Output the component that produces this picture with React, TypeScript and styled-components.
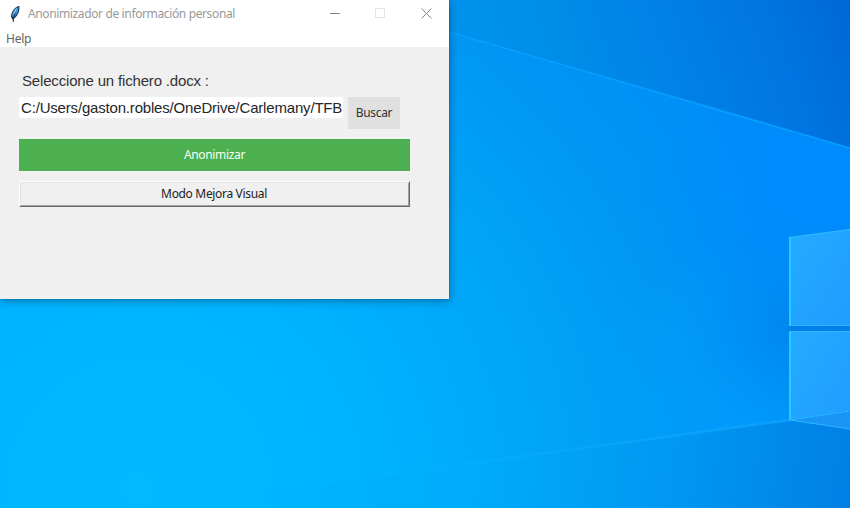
import React from "react";
import styled, { createGlobalStyle } from "styled-components";

const GlobalStyle = createGlobalStyle`
  * { box-sizing: border-box; }
  body { margin: 0; overflow: hidden; }
`;

const Desktop = styled.main`
  position: relative;
  width: 850px;
  height: 508px;
  overflow: hidden;
  background: #00a5f9;
  font-family: "Noto Sans", "Open Sans", sans-serif;
  font-size: 12px;
`;

const Wallpaper = styled.svg`
  position: absolute;
  inset: 0;
  display: block;
`;

const AppWindow = styled.section`
  position: relative;
  display: flex;
  flex-direction: column;
  width: 449px;
  height: 299px;
  background: #f0f0f0;
  box-shadow: 0 0 1px rgba(0, 50, 90, 0.5), 1px 2px 8px rgba(0, 45, 70, 0.45);
`;

const TitleBar = styled.header`
  display: flex;
  align-items: center;
  height: 27px;
  padding-left: 8px;
  background: #fff;
`;

const Title = styled.h1`
  flex: 1;
  margin: 0 0 0 7px;
  font-size: 12px;
  font-weight: 400;
  line-height: 27px;
  letter-spacing: -0.37px;
  color: #999;
  white-space: nowrap;
`;

const CaptionButton = styled.button`
  display: flex;
  align-items: center;
  justify-content: center;
  width: 45.5px;
  height: 27px;
  padding: 0;
  border: 0;
  background: none;
`;

const MenuBar = styled.nav`
  height: 20px;
  padding-left: 6px;
  background: #fff;
  color: #5c6660;
  line-height: 23px;
  letter-spacing: -0.25px;
`;

const Form = styled.div`
  display: flex;
  flex-direction: column;
  gap: 10px;
  width: 410px;
  padding: 24px 0 0 19px;
`;

const FileField = styled.div`
  display: grid;
  grid-template-columns: 324px 52px;
  column-gap: 5px;
  font-family: "Liberation Sans", Arial, sans-serif;
`;

const FieldLabel = styled.label`
  grid-column: 1 / -1;
  height: 26px;
  padding-left: 3px;
  font-size: 15px;
  line-height: 20px;
  letter-spacing: -0.17px;
  color: #333;
  white-space: nowrap;
`;

const PathInput = styled.div`
  height: 21px;
  padding-left: 2px;
  background: #fff;
  font-size: 15px;
  line-height: 21px;
  letter-spacing: -0.18px;
  color: #26262b;
  white-space: nowrap;
`;

const FlatButton = styled.button<{ $bg: string; $fg: string }>`
  height: 32px;
  padding: 0;
  border: 0;
  background: ${(p) => p.$bg};
  color: ${(p) => p.$fg};
  font: 12px/32px "Noto Sans", "Open Sans", sans-serif;
  letter-spacing: -0.33px;
`;

const RaisedButton = styled.button`
  height: 26px;
  padding: 0 1px 0 0;
  border: 1px solid;
  border-color: #fff #696969 #696969 #fff;
  box-shadow: inset 1px 1px #e3e3e3, inset -1px -1px #a0a0a0;
  background: #f0f0f0;
  color: #1c1c1c;
  font: 12px/24px "Noto Sans", "Open Sans", sans-serif;
  letter-spacing: -0.33px;
`;

function DesktopScene() {
  return (
    <Wallpaper width="850" height="508" viewBox="0 0 850 508" aria-hidden="true">
      <defs>
        <radialGradient id="base" gradientUnits="userSpaceOnUse" cx="140" cy="490" r="760">
          <stop offset="0" stopColor="#00b9ff" />
          <stop offset="0.28" stopColor="#00b4ff" />
          <stop offset="0.55" stopColor="#00a4f8" />
          <stop offset="0.74" stopColor="#0096f4" />
          <stop offset="1" stopColor="#0089f8" />
        </radialGradient>
        <linearGradient id="sky" gradientUnits="userSpaceOnUse" x1="470" y1="130" x2="860" y2="-10">
          <stop offset="0" stopColor="#0095ef" />
          <stop offset="0.3" stopColor="#008ce9" />
          <stop offset="0.6" stopColor="#007de7" />
          <stop offset="0.82" stopColor="#0072e0" />
          <stop offset="1" stopColor="#0064d3" />
        </linearGradient>
        <linearGradient id="floor" gradientUnits="userSpaceOnUse" x1="230" y1="440" x2="850" y2="515">
          <stop offset="0" stopColor="#00b8ff" />
          <stop offset="0.4" stopColor="#00abfb" />
          <stop offset="0.72" stopColor="#0097f2" />
          <stop offset="1" stopColor="#007fe5" />
        </linearGradient>
        <radialGradient id="glow" gradientUnits="userSpaceOnUse" cx="830" cy="190" r="190">
          <stop offset="0" stopColor="#008cff" />
          <stop offset="1" stopColor="#008cff" stopOpacity="0" />
        </radialGradient>
        <radialGradient id="shade" gradientUnits="userSpaceOnUse" cx="800" cy="328" r="120">
          <stop offset="0" stopColor="#0080ec" stopOpacity="0.75" />
          <stop offset="1" stopColor="#0088f0" stopOpacity="0" />
        </radialGradient>
        <radialGradient id="lower" gradientUnits="userSpaceOnUse" cx="750" cy="415" r="170">
          <stop offset="0" stopColor="#009dff" stopOpacity="0.8" />
          <stop offset="1" stopColor="#00a5ff" stopOpacity="0" />
        </radialGradient>
        <linearGradient id="beam" gradientUnits="userSpaceOnUse" x1="250" y1="0" x2="790" y2="0">
          <stop offset="0" stopColor="#10b8ff" stopOpacity="0" />
          <stop offset="1" stopColor="#10a6ff" stopOpacity="0.7" />
        </linearGradient>
        <linearGradient id="pane" x1="0" y1="0" x2="1" y2="1">
          <stop offset="0" stopColor="#24abff" />
          <stop offset="1" stopColor="#1f9dff" />
        </linearGradient>
      </defs>
      <rect width="850" height="508" fill="url(#base)" />
      <path d="M449 32L850 148V0H449Z" fill="url(#sky)" />
      <path d="M500 47L850 148V390H500Z" fill="url(#glow)" />
      <circle cx="750" cy="415" r="170" fill="url(#lower)" />
      <circle cx="800" cy="328" r="120" fill="url(#shade)" />
      <path d="M140 508L790 420L850 429V508Z" fill="url(#floor)" />
      <path d="M449 32L850 148" stroke="#08a0ff" strokeWidth="1.5" />
      <path d="M240 494.5L790 420" stroke="url(#beam)" strokeWidth="2.5" />
      <path d="M789 237L850 229V326H789Z" fill="url(#pane)" />
      <path d="M789 331H850V429L789 420Z" fill="url(#pane)" />
      <path d="M790 420L850 411V429Z" fill="#1895f7" />
      <path d="M788 326H850V331H788Z" fill="#0080e8" />
      <path d="M790 237.5L850 229.5" stroke="#2bbaff" />
      <path d="M790 237V326M790 331V420" stroke="#28cbff" strokeWidth="2" />
      <path d="M790 420L850 429M791 331.5H850M791 325.5H850" stroke="#2db5ff" />
      <path d="M790 420L850 411" stroke="#25bdff" strokeDasharray="4 1" />
    </Wallpaper>
  );
}

function Feather() {
  return (
    <svg width="13" height="18" viewBox="0 0 13 18" aria-hidden="true">
      <path d="M11.3 1C8 .8 3.2 6.5 3 11.2L4.2 14.4L5.6 14C9 12 12.3 6 11.3 1Z" fill="#202533" />
      <path d="M10.3 1.8C6.8 3 4.1 7.6 4 11.5L5.2 12.9C8.9 10.7 11.2 6.2 10.3 1.8Z" fill="#2f8fd4" />
      <path d="M9.3 2.7C6.5 4.4 5 8 4.5 11L7 7.5Z" fill="#83c8ef" />
      <path d="M7.2 8.6L5.3 12.3V17" fill="none" stroke="#202636" strokeWidth="1" />
    </svg>
  );
}

export default function App() {
  return (
    <>
      <GlobalStyle />
      <Desktop>
        <DesktopScene />
        <AppWindow>
          <TitleBar>
            <Feather />
            <Title>Anonimizador de información personal</Title>
            <CaptionButton aria-label="Minimizar">
              <svg width="11" height="11"><path d="M0 5.5H10" stroke="#888" /></svg>
            </CaptionButton>
            <CaptionButton aria-label="Maximizar">
              <svg width="11" height="11"><path d="M.5 .5H9.5V9.5H.5Z" fill="none" stroke="#e5e5e5" /></svg>
            </CaptionButton>
            <CaptionButton aria-label="Cerrar">
              <svg width="11" height="11"><path d="M.5 .5L10.5 10.5M10.5 .5L.5 10.5" stroke="#8c8488" /></svg>
            </CaptionButton>
          </TitleBar>
          <MenuBar>Help</MenuBar>
          <Form>
            <FileField>
              <FieldLabel>Seleccione un fichero .docx :</FieldLabel>
              <PathInput>C:/Users/gaston.robles/OneDrive/Carlemany/TFB</PathInput>
              <FlatButton $bg="#e0e0e0" $fg="#333">Buscar</FlatButton>
            </FileField>
            <FlatButton $bg="#4caf50" $fg="#f4fff4">Anonimizar</FlatButton>
            <RaisedButton>Modo Mejora Visual</RaisedButton>
          </Form>
        </AppWindow>
      </Desktop>
    </>
  );
}
